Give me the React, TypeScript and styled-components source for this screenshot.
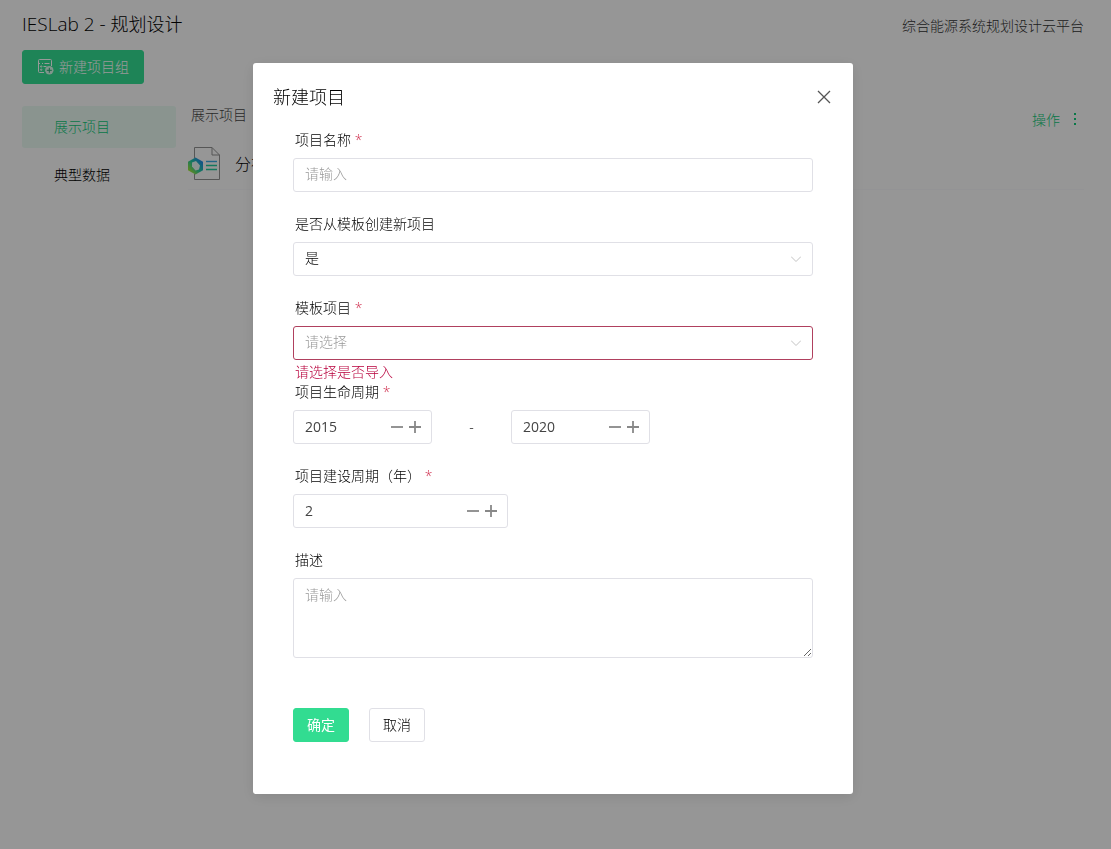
import React, { useState } from "react";
import styled, { createGlobalStyle, css } from "styled-components";

const GlobalStyle = createGlobalStyle`
  * { box-sizing: border-box; }
  html, body { margin: 0; min-height: 100%; background: #fafafa; }
  body, button, input, select, textarea {
    font-family: "Open Sans", "Noto Sans CJK SC", sans-serif;
    font-weight: 300;
    font-size: 14px;
  }
  body { color: #000; line-height: 20px; }
`;

const Page = styled.div`
  padding: 10px 27px 0 22px;
`;

const TopBar = styled.header`
  display: flex;
  justify-content: space-between;
  align-items: center;
  height: 28px;
`;

const Brand = styled.h1`
  margin: 0;
  font-size: 18px;
  font-weight: 300;
  line-height: 28px;
`;

const BrandName = styled.span`
  font-size: 19px;
`;

const Slogan = styled.span`
  padding-top: 4px;
  color: #333;
`;

const buttonBase = css`
  display: inline-flex;
  align-items: center;
  justify-content: center;
  height: 34px;
  border-radius: 3px;
  cursor: pointer;
`;

const Button = styled.button<{ $primary?: boolean }>`
  ${buttonBase}
  padding: 0 13px 2px;
  border: 1px solid ${(p) => (p.$primary ? "#32dc91" : "#e0e0e6")};
  background: ${(p) => (p.$primary ? "#32dc91" : "#fff")};
  color: ${(p) => (p.$primary ? "#fff" : "#000")};
  font-weight: ${(p) => (p.$primary ? 400 : 300)};
`;

const NewGroupButton = styled(Button)`
  gap: 5px;
  margin-top: 12px;
  padding: 0 14px 2px;
  font-weight: 300;
`;

const Body = styled.div`
  display: flex;
  gap: 15px;
  margin-top: 22px;
`;

const SideNav = styled.nav`
  display: flex;
  flex-direction: column;
  gap: 6px;
  flex: 0 0 154px;
`;

const NavItem = styled.a<{ $active?: boolean }>`
  height: 42px;
  padding-left: 32px;
  border-radius: 3px;
  line-height: 42px;
  text-decoration: none;
  color: ${(p) => (p.$active ? "#10c878" : "#000")};
  background: ${(p) => (p.$active ? "#e6f7ef" : "transparent")};
`;

const Main = styled.main`
  flex: 1;
  min-width: 0;
`;

const ListHead = styled.div`
  display: flex;
  justify-content: space-between;
  line-height: 18px;
  color: #444;
`;

const Actions = styled.button`
  display: flex;
  align-items: center;
  gap: 13px;
  height: 26px;
  padding: 0;
  margin-right: 7px;
  border: 0;
  background: none;
  color: #10c878;
  cursor: pointer;
`;

const ProjectRow = styled.div`
  display: flex;
  align-items: center;
  gap: 14px;
  height: 58px;
  padding-top: 6px;
  margin-left: -3px;
  border-bottom: 1px solid #f6f6f8;
  font-size: 16px;
`;

const Overlay = styled.div`
  position: fixed;
  inset: 0;
  overflow: auto;
  padding: 63px 5px 55px 0;
  background: rgba(0, 0, 0, 0.4);
`;

const Modal = styled.section`
  width: 600px;
  max-width: 100%;
  margin: 0 auto;
  padding: 20px 20px 28px;
  border-radius: 3px;
  background: #fff;
  box-shadow: 0 3px 14px rgba(0, 0, 0, 0.1);
`;

const ModalHead = styled.div`
  display: flex;
  justify-content: space-between;
  align-items: center;
  height: 28px;
  margin-bottom: 21px;
`;

const ModalTitle = styled.h2`
  margin: 0;
  font-size: 18px;
  font-weight: 300;
  line-height: 28px;
`;

const CloseButton = styled.button`
  display: flex;
  align-items: center;
  justify-content: center;
  width: 18px;
  height: 18px;
  padding: 0;
  border: 0;
  background: none;
  color: #555;
  cursor: pointer;
`;

const Form = styled.form`
  padding: 0 20px;
`;

const Label = styled.label`
  display: block;
  height: 26px;
  padding-left: 2px;
  line-height: 16px;
`;

const Star = styled.span`
  color: #d03050;
`;

const Feedback = styled.div`
  height: 24px;
  padding-left: 2px;
  line-height: 24px;
  color: #b8003c;
`;

const Frame = styled.div<{ $error?: boolean; $width?: number }>`
  display: flex;
  align-items: center;
  position: relative;
  width: ${(p) => (p.$width ? `${p.$width}px` : "100%")};
  height: 34px;
  border: 1px solid ${(p) => (p.$error ? "#b0405e" : "#e0e0e6")};
  border-radius: 3px;
  background: #fff;
`;

const field = css`
  width: 100%;
  min-width: 0;
  height: 32px;
  padding: 0 11px 3px;
  border: 0;
  outline: 0;
  background: none;
  color: #000;
  &::placeholder {
    color: #999;
    opacity: 1;
  }
`;

const TextInput = styled.input`
  ${field}
`;

const NumberInput = styled.input`
  ${field}
  padding-bottom: 2px;
  font-weight: 400;
  color: #444;
  appearance: textfield;
  &::-webkit-inner-spin-button {
    appearance: none;
    margin: 0;
  }
`;

const Select = styled.select<{ $empty?: boolean }>`
  ${field}
  appearance: none;
  color: ${(p) => (p.$empty ? "#999" : "#000")};
`;

const Arrow = styled.svg`
  position: absolute;
  right: 11px;
  pointer-events: none;
`;

const Steps = styled.div`
  display: flex;
  gap: 4px;
  padding-right: 9px;
`;

const StepButton = styled.button`
  display: flex;
  align-items: center;
  justify-content: center;
  width: 14px;
  height: 14px;
  padding: 0;
  border: 0;
  background: none;
  color: #888;
  cursor: pointer;
`;

const Range = styled.div`
  display: flex;
  align-items: center;
`;

const Dash = styled.span`
  width: 79px;
  text-align: center;
`;

const TextArea = styled.textarea`
  ${field}
  display: block;
  height: 80px;
  padding: 6px 11px;
  border: 1px solid #e0e0e6;
  border-radius: 3px;
  line-height: 20px;
  resize: vertical;
`;

const Buttons = styled.div`
  display: flex;
  gap: 20px;
  padding: 26px 0 24px;
`;

const GroupIcon = () => (
  <svg width="17" height="17" viewBox="0 0 17 17" fill="none" stroke="currentColor" strokeWidth="1">
    <path d="M7 14.500H2.500a1 1 0 0 1-1-1v-11a1 1 0 0 1 1-1h11a1 1 0 0 1 1 1V8" />
    <path d="M1.500 5.500h1.500M5 5.500h1M7.500 5.500h5" />
    <circle cx="4.200" cy="8.500" r=".7" />
    <circle cx="4.200" cy="11.700" r=".7" />
    <path d="M6.500 8.500h3" />
    <circle cx="12.300" cy="12.300" r="4.200" fill="currentColor" fillOpacity=".8" stroke="none" />
    <path d="M12.300 9.800v5M9.800 12.300h5" stroke="#27a871" />
  </svg>
);

const ProjectIcon = () => (
  <svg width="33" height="34" viewBox="0 0 33 34" fill="none">
    <defs>
      <linearGradient id="hex" x1="1" y1="0" x2="0" y2="1">
        <stop offset="0.1" stopColor="#2080f0" />
        <stop offset="0.5" stopColor="#22c8a0" />
        <stop offset="0.9" stopColor="#b0e82a" />
      </linearGradient>
    </defs>
    <path d="M6.500 11V.5H24L31.500 8V32.500H6.500V27M24 .5V8h7.500" stroke="#909090" />
    <path d="M18 14.500h11" stroke="#3aa8e0" strokeWidth="1.400" />
    <path d="M18 18.500h11M18 22.500h11" stroke="#20c89c" strokeWidth="1.400" />
    <path d="M7.500 10.500 15 14.700v8.600L7.500 27.500 0 23.300v-8.600z" fill="url(#hex)" />
    <path d="m4 15.500 4-1.500 4 4.500-1 4-3.500 1-3.500-4z" fill="#e8f6f2" />
  </svg>
);

const DotsIcon = () => (
  <svg width="4" height="12" viewBox="0 0 4 12" fill="currentColor">
    <path d="M1 0h2v2H1zM1 5h2v2H1zM1 10h2v2H1z" />
  </svg>
);

const CloseIcon = () => (
  <svg width="14" height="14" viewBox="0 0 14 14" stroke="currentColor" strokeWidth="1.300">
    <path d="M1 1l12 12M13 1L1 13" />
  </svg>
);

const SelectArrow = () => (
  <Arrow width="10" height="6" viewBox="0 0 10 6" fill="none" stroke="#c2c2c2">
    <path d="M0 .5l5 5 5-5" />
  </Arrow>
);

const MinusIcon = () => (
  <svg width="12" height="12" viewBox="0 0 12 12" stroke="currentColor" strokeWidth="1.800">
    <path d="M0 6h12" />
  </svg>
);

const PlusIcon = () => (
  <svg width="12" height="12" viewBox="0 0 12 12" stroke="currentColor" strokeWidth="1.800">
    <path d="M0 6h12M6 0v12" />
  </svg>
);

type StepperProps = { id: string; label?: string; initial: number; width: number };

function Stepper({ id, label, initial, width }: StepperProps) {
  const [value, setValue] = useState(initial);
  return (
    <Frame $width={width}>
      <NumberInput
        id={id}
        type="number"
        aria-label={label}
        value={value}
        onChange={(e) => setValue(Number(e.target.value))}
      />
      <Steps>
        <StepButton type="button" aria-label="减少" onClick={() => setValue(value - 1)}>
          <MinusIcon />
        </StepButton>
        <StepButton type="button" aria-label="增加" onClick={() => setValue(value + 1)}>
          <PlusIcon />
        </StepButton>
      </Steps>
    </Frame>
  );
}

type FieldProps = {
  id: string;
  label: string;
  required?: boolean;
  error?: string;
  children: React.ReactNode;
};

function Field({ id, label, required, error, children }: FieldProps) {
  return (
    <div>
      <Label htmlFor={id}>
        {label}
        {required && <Star> *</Star>}
      </Label>
      {children}
      <Feedback>{error}</Feedback>
    </div>
  );
}

export default function App() {
  const [template, setTemplate] = useState("");
  return (
    <>
      <GlobalStyle />
      <Page>
        <TopBar>
          <Brand>
            <BrandName>IESLab 2 - </BrandName>规划设计
          </Brand>
          <Slogan>综合能源系统规划设计云平台</Slogan>
        </TopBar>
        <NewGroupButton $primary type="button">
          <GroupIcon />
          新建项目组
        </NewGroupButton>
        <Body>
          <SideNav>
            <NavItem href="#show" $active>展示项目</NavItem>
            <NavItem href="#data">典型数据</NavItem>
          </SideNav>
          <Main>
            <ListHead>
              <span>展示项目</span>
              <Actions type="button">
                操作
                <DotsIcon />
              </Actions>
            </ListHead>
            <ProjectRow>
              <ProjectIcon />
              分布式
            </ProjectRow>
          </Main>
        </Body>
      </Page>
      <Overlay>
        <Modal role="dialog" aria-modal="true" aria-labelledby="modal-title">
          <ModalHead>
            <ModalTitle id="modal-title">新建项目</ModalTitle>
            <CloseButton type="button" aria-label="关闭">
              <CloseIcon />
            </CloseButton>
          </ModalHead>
          <Form onSubmit={(e) => e.preventDefault()}>
            <Field id="name" label="项目名称" required>
              <Frame>
                <TextInput id="name" placeholder="请输入" />
              </Frame>
            </Field>
            <Field id="from-template" label="是否从模板创建新项目">
              <Frame>
                <Select id="from-template" defaultValue="yes">
                  <option value="yes">是</option>
                  <option value="no">否</option>
                </Select>
                <SelectArrow />
              </Frame>
            </Field>
            <Field id="template" label="模板项目" required error="请选择是否导入">
              <Frame $error>
                <Select
                  id="template"
                  $empty={template === ""}
                  value={template}
                  onChange={(e) => setTemplate(e.target.value)}
                >
                  <option value="">请选择</option>
                </Select>
                <SelectArrow />
              </Frame>
            </Field>
            <Field id="start" label="项目生命周期" required>
              <Range>
                <Stepper id="start" initial={2015} width={139} />
                <Dash>-</Dash>
                <Stepper id="end" label="结束年份" initial={2020} width={139} />
              </Range>
            </Field>
            <Field id="build" label="项目建设周期（年）" required>
              <Stepper id="build" initial={2} width={215} />
            </Field>
            <Field id="desc" label="描述">
              <TextArea id="desc" placeholder="请输入" />
            </Field>
            <Buttons>
              <Button $primary type="submit">确定</Button>
              <Button type="button">取消</Button>
            </Buttons>
          </Form>
        </Modal>
      </Overlay>
    </>
  );
}
